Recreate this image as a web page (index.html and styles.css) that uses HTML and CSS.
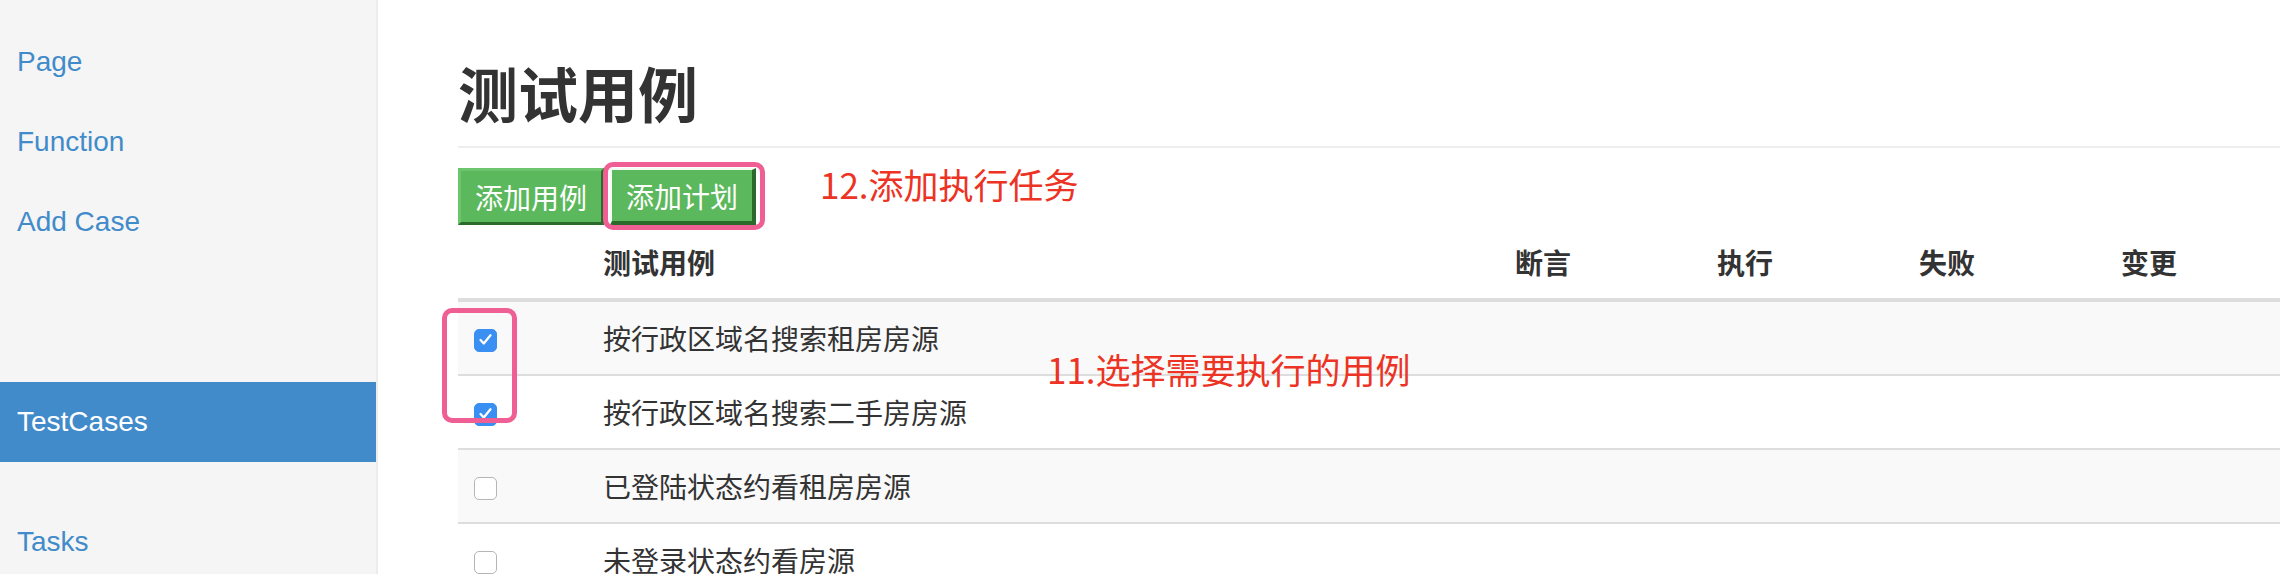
FILE: index.html
```html
<!DOCTYPE html>
<html lang="zh-CN">
<head>
<meta charset="utf-8">
<title>测试用例</title>
<link rel="stylesheet" href="styles.css">
</head>
<body>
<div class="layout">
  <aside class="sidebar">
    <ul class="nav">
      <li><a href="#">Page</a></li>
      <li><a href="#">Function</a></li>
      <li><a href="#">Add Case</a></li>
    </ul>
    <ul class="nav nav-gap-lg">
      <li class="active"><a href="#">TestCases</a></li>
    </ul>
    <ul class="nav nav-gap">
      <li><a href="#">Tasks</a></li>
    </ul>
  </aside>
  <main class="main">
    <h1 class="page-header">测试用例</h1>
    <div class="toolbar">
      <button class="btn">添加用例</button>
      <button class="btn btn-focus">添加计划</button>
    </div>
    <table class="cases">
      <colgroup>
        <col class="col-check">
        <col class="col-name">
        <col class="col-num">
        <col class="col-num">
        <col class="col-num">
        <col class="col-num">
      </colgroup>
      <thead>
        <tr><th></th><th>测试用例</th><th>断言</th><th>执行</th><th>失败</th><th>变更</th></tr>
      </thead>
      <tbody>
        <tr><td><span class="cb checked"><svg viewBox="0 0 24 24" width="23" height="23"><path d="M6.8 12.6 L10.2 16.2 L17.2 7.6" fill="none" stroke="#fff" stroke-width="2.4" stroke-linecap="round" stroke-linejoin="round"/></svg></span></td><td>按行政区域名搜索租房房源</td><td></td><td></td><td></td><td></td></tr>
        <tr><td><span class="cb checked"><svg viewBox="0 0 24 24" width="23" height="23"><path d="M6.8 12.6 L10.2 16.2 L17.2 7.6" fill="none" stroke="#fff" stroke-width="2.4" stroke-linecap="round" stroke-linejoin="round"/></svg></span></td><td>按行政区域名搜索二手房房源</td><td></td><td></td><td></td><td></td></tr>
        <tr><td><span class="cb"></span></td><td>已登陆状态约看租房房源</td><td></td><td></td><td></td><td></td></tr>
        <tr><td><span class="cb"></span></td><td>未登录状态约看房源</td><td></td><td></td><td></td><td></td></tr>
      </tbody>
    </table>
    <span class="mark mark-plan"></span>
    <span class="note note-plan">12.添加执行任务</span>
    <span class="mark mark-select"></span>
    <span class="note note-select">11.选择需要执行的用例</span>
  </main>
</div>
</body>
</html>
```

FILE: styles.css
```css
* { box-sizing: border-box; }
html, body {
  margin: 0;
  padding: 0;
  background: #fff;
  overflow: hidden;
}
body {
  font-family: "Liberation Sans", "Noto Sans CJK SC", sans-serif;
  font-size: 28px;
  line-height: 40px;
  color: #333;
  width: 2280px;
  height: 574px;
}
.layout {
  display: flex;
  height: 574px;
}
.sidebar {
  flex: 0 0 378px;
  background: #f5f5f5;
  border-right: 2px solid #ececec;
  padding-top: 22px;
}
.nav {
  list-style: none;
  margin: 0;
  padding: 0;
}
.nav-gap-lg { margin-top: 120px; }
.nav-gap { margin-top: 40px; }
.nav a {
  display: block;
  height: 80px;
  line-height: 80px;
  padding-left: 17px;
  color: #428bca;
  text-decoration: none;
  font-family: "Liberation Sans", sans-serif;
  font-size: 28px;
}
.nav .active a {
  background: #428bca;
  color: #fff;
}
.main {
  position: relative;
  flex: 0 0 auto;
  padding: 59px 0 0 80px;
  width: 1930px;
}
.page-header {
  margin: 0 0 20px;
  padding-bottom: 21px;
  border-bottom: 2px solid #eee;
  font-family: "Noto Sans CJK SC", sans-serif;
  font-weight: 700;
  font-size: 60px;
  line-height: 66px;
  color: #333;
  width: 1850px;
}
.toolbar {
  display: flex;
  gap: 6px;
  height: 58px;
}
.btn {
  font-family: "Noto Sans CJK SC", sans-serif;
  font-size: 28px;
  line-height: 38px;
  color: #fff;
  background: #5cb85c;
  border: 3px solid;
  border-color: #6cc46c #2c6a2c #2c6a2c #6cc46c;
  padding: 6px 14px;
  margin: 0;
  height: 57px;
  border-radius: 0;
}
.btn-focus {
  border-color: #f4fbf4 #2c6a2c #2c6a2c #f4fbf4;
  border-width: 2px 4px 4px 2px;
}
.cases {
  border-collapse: collapse;
  table-layout: fixed;
  width: 1849px;
  font-family: "Noto Sans CJK SC", sans-serif;
}
.col-check { width: 129px; }
.col-name { width: 912px; }
.col-num { width: 202px; }
.cases th {
  text-align: left;
  font-weight: 700;
  padding: 16px;
  line-height: 40px;
  border-bottom: 4px solid #ddd;
}
.cases td {
  padding: 16px;
  line-height: 40px;
  border-top: 2px solid #ddd;
  vertical-align: middle;
}
.cases tbody tr:nth-child(odd) td { background: #f9f9f9; }
.cb {
  display: inline-block;
  vertical-align: middle;
  width: 23px;
  height: 23px;
  border-radius: 5px;
  border: 1.5px solid #b5b5b5;
  background: #fff;
  position: relative;
  top: -2px;
}
.cb svg { display: block; margin: -1.5px; }
.cb.checked {
  background: #3a8ff2;
  border-color: #3a8ff2;
}
.mark {
  position: absolute;
  border: 5px solid #ef5f93;
  border-radius: 10px;
}
.mark-plan { left: 225px; top: 162px; width: 162px; height: 68px; }
.mark-select { left: 64px; top: 308px; width: 75px; height: 115px; }
.note {
  position: absolute;
  font-family: "Noto Sans CJK SC", sans-serif;
  font-size: 35px;
  line-height: 40px;
  color: #ec3324;
  white-space: nowrap;
}
.note-plan { left: 442px; top: 164px; }
.note-select { left: 669px; top: 349px; }
```
